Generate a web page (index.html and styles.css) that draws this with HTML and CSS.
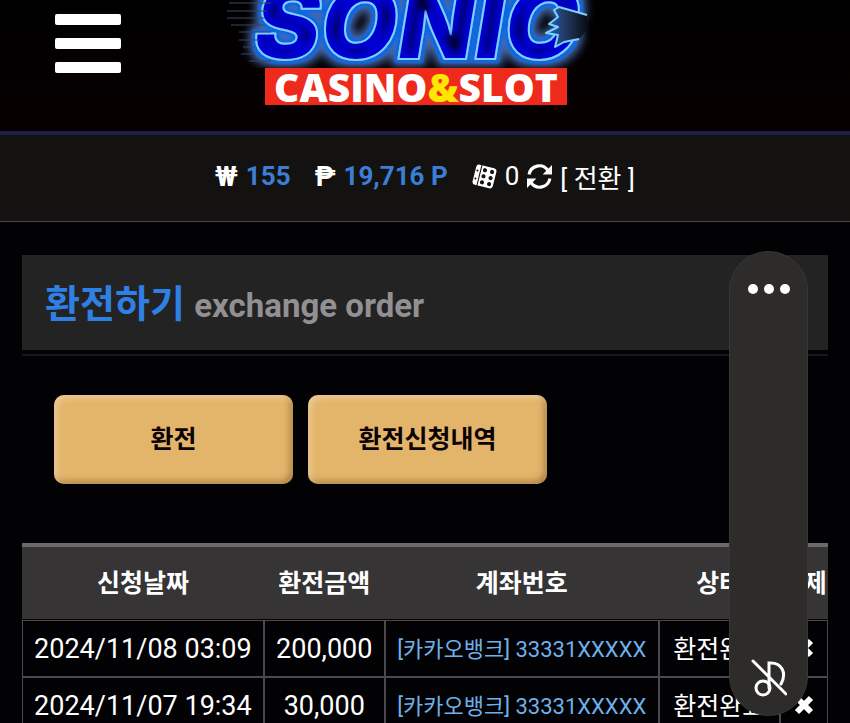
FILE: index.html
```html
<!DOCTYPE html>
<html lang="ko">
<head>
    <meta charset="UTF-8">
    <meta name="viewport" content="width=device-width, initial-scale=1.0">
    <title>환전하기</title>
    <link rel="stylesheet" href="styles.css">
</head>
<body>
    <!-- Header -->
    <header class="header">
        <button class="menu-btn" type="button" aria-label="메뉴">
            <span></span>
            <span></span>
            <span></span>
        </button>
        <a class="logo" href="#">
            <svg class="logo-neon" viewBox="0 0 390 68">
                <defs>
                    <filter id="neon" x="-10%" y="-10%" width="120%" height="130%">
                        <feMorphology in="SourceAlpha" operator="dilate" radius="6" result="wide"/>
                        <feGaussianBlur in="wide" stdDeviation="4" result="haze"/>
                        <feFlood flood-color="#4468a8"/>
                        <feComposite in2="haze" operator="in" result="halo"/>
                        <feMorphology in="SourceAlpha" operator="dilate" radius="3" result="near"/>
                        <feGaussianBlur in="near" stdDeviation="1" result="nearSoft"/>
                        <feFlood flood-color="#0a68e0"/>
                        <feComposite in2="nearSoft" operator="in" result="edge"/>
                        <feMorphology in="SourceAlpha" operator="erode" radius="7" result="thin"/>
                        <feGaussianBlur in="thin" stdDeviation="3" result="thinSoft"/>
                        <feFlood flood-color="#00022c"/>
                        <feComposite in2="thinSoft" operator="in" result="core"/>
                        <feMerge>
                            <feMergeNode in="halo"/>
                            <feMergeNode in="edge"/>
                            <feMergeNode in="SourceGraphic"/>
                            <feMergeNode in="core"/>
                        </feMerge>
                    </filter>
                    <linearGradient id="notch">
                        <stop offset="0" stop-color="#0a68e0"/>
                        <stop offset="0.4" stop-color="#24406c"/>
                        <stop offset="1" stop-color="#0a0c14"/>
                    </linearGradient>
                </defs>
                <text class="neon-text" x="33" y="59" filter="url(#neon)">SONIC</text>
                <path class="speed-lines" d="M8 3H50M6 11H46M6 18H44M10 25H44M18 32H50M18 40H38M22 47H34M20 54H34M28 61H50"/>
                <path class="neon-notch" d="M366 15L338 7L333 10L337 17L328 24L337 27L325 33L337 35L334 47L343 42L358 39L366 30Z"/>
                <path class="neon-teeth" d="M366 15L338 7L333 10L337 17L328 24L337 27L325 33L337 35L334 47L343 42L358 39"/>
            </svg>
            <span class="logo-tag">CASINO<b>&amp;</b>SLOT</span>
        </a>
    </header>

    <!-- Balance -->
    <div class="balance">
        <span class="sign">₩</span>
        <strong class="cash">155</strong>
        <span class="sign">₱</span>
        <strong class="point">19,716 P</strong>
        <svg class="dice" viewBox="0 0 24 24" aria-hidden="true">
            <g transform="rotate(14 12 12)">
                <rect x="2" y="2" width="20" height="20" rx="3" fill="#fff"/>
                <path d="M7 2V22" stroke="#131211" stroke-width="1"/>
                <g fill="#131211">
                    <circle cx="11" cy="6" r="2"/><circle cx="11" cy="12" r="2"/><circle cx="11" cy="18" r="2"/>
                    <circle cx="18" cy="6" r="2"/><circle cx="18" cy="12" r="2"/><circle cx="18" cy="18" r="2"/>
                    <circle cx="4" cy="8" r="1"/><circle cx="4" cy="16" r="1"/>
                </g>
            </g>
        </svg>
        <span>0</span>
        <a class="convert" href="#">
            <svg viewBox="0 0 24 24" aria-hidden="true">
                <path d="M2 10A10 10 0 0 1 20 6M22 14A10 10 0 0 1 4 18" fill="none" stroke="#fff" stroke-width="3"/>
                <path d="M24 1V10H15ZM0 23V14H9Z" fill="#fff"/>
            </svg>
            [ 전환 ]
        </a>
    </div>

    <main class="container">
        <h1 class="page-title">환전하기 <small>exchange order</small></h1>

        <div class="tabs">
            <button class="tab-btn" type="button">환전</button>
            <button class="tab-btn" type="button">환전신청내역</button>
        </div>

        <!-- Order history -->
        <table class="history">
            <thead>
                <tr>
                    <th class="col-date">신청날짜</th>
                    <th class="col-amount">환전금액</th>
                    <th class="col-account">계좌번호</th>
                    <th class="col-status">상태</th>
                    <th>삭제</th>
                </tr>
            </thead>
            <tbody>
                <tr>
                    <td>2024/11/08 03:09</td>
                    <td>200,000</td>
                    <td class="account">[카카오뱅크] 33331XXXXX</td>
                    <td class="status">환전완료</td>
                    <td><button class="delete-btn" type="button" aria-label="삭제"><svg viewBox="0 0 20 20"><path d="M3 3L17 17M17 3L3 17"/></svg></button></td>
                </tr>
                <tr>
                    <td>2024/11/07 19:34</td>
                    <td>30,000</td>
                    <td class="account">[카카오뱅크] 33331XXXXX</td>
                    <td class="status">환전완료</td>
                    <td><button class="delete-btn" type="button" aria-label="삭제"><svg viewBox="0 0 20 20"><path d="M3 3L17 17M17 3L3 17"/></svg></button></td>
                </tr>
            </tbody>
        </table>
    </main>

    <!-- Volume panel -->
    <div class="volume-panel">
        <button class="more-btn" type="button" aria-label="더보기">
            <span></span>
            <span></span>
            <span></span>
        </button>
        <button class="mute-btn" type="button" aria-label="음소거">
            <svg viewBox="0 0 36 38">
                <circle cx="12" cy="29" r="7"/>
                <path d="M18 29V4C31 3 36 14 30 25M2 2L35 35"/>
            </svg>
        </button>
    </div>
</body>
</html>
```

FILE: styles.css
```css
* {
    box-sizing: border-box;
}

body {
    margin: 0;
    background: #020103;
    color: #fff;
    font-family: Roboto, "Noto Sans CJK KR", sans-serif;
    font-size: 26px;
    overflow: hidden;
}

button {
    padding: 0;
    border: none;
    background: none;
    color: inherit;
    font-family: inherit;
    cursor: pointer;
}

a {
    color: inherit;
    text-decoration: none;
}

.header {
    display: grid;
    grid-template-columns: 1fr 390px 1fr;
    align-items: start;
    height: 135px;
    padding-right: 18px;
    background: linear-gradient(#000, #070001);
    border-bottom: 4px solid #1c2048;
}

.menu-btn {
    display: flex;
    flex-direction: column;
    gap: 13px;
    width: 66px;
    margin: 14px 0 0 55px;
}

.menu-btn span {
    height: 11px;
    border-radius: 2px;
    background: #fff;
}

.logo {
    display: flex;
    flex-direction: column;
    align-items: center;
}

.logo-neon {
    display: block;
    width: 390px;
    height: 68px;
}

.neon-text {
    fill: #0010d8;
    stroke: #7fd0ff;
    stroke-width: 2px;
    stroke-linejoin: round;
    font-family: Inter, sans-serif;
    font-size: 100px;
    font-weight: 900;
    font-style: italic;
}

.speed-lines {
    fill: none;
    stroke: #3b4663;
}

.neon-notch {
    fill: url(#notch);
}

.neon-teeth {
    fill: none;
    stroke: #7fd0ff;
    stroke-width: 2px;
    stroke-linejoin: round;
}

.logo-tag {
    width: 302px;
    background: #ee2a1c;
    font-family: "Open Sans", sans-serif;
    font-size: 39px;
    font-weight: 800;
    line-height: 37px;
    text-align: center;
}

.logo-tag b {
    color: #ffe600;
    font-weight: 800;
}

.balance {
    display: flex;
    align-items: center;
    justify-content: center;
    gap: 8px;
    height: 87px;
    padding-bottom: 4px;
    background: #131211;
    border-bottom: 1px solid #4a4a4a;
}

.sign {
    font-size: 28px;
    font-weight: 700;
}

.cash,
.point {
    color: #3a7fd5;
    font-weight: 700;
}

.cash {
    margin-right: 16px;
}

.point {
    margin-right: 16px;
}

.dice,
.convert svg {
    width: 25px;
    height: 25px;
}

.convert {
    display: flex;
    align-items: center;
    gap: 8px;
}

.container {
    padding: 33px 22px 0;
}

.page-title {
    margin: 0;
    height: 95px;
    padding-left: 23px;
    background: #242324;
    box-shadow: 0 4px 0 #020103, 0 6px 0 #191818;
    color: #2f80e4;
    font-size: 38px;
    line-height: 99px;
}

.page-title small {
    color: #929092;
    font-size: 33px;
    font-weight: 700;
}

.tabs {
    display: flex;
    gap: 15px;
    margin: 45px 32px 59px;
}

.tab-btn {
    width: 239px;
    height: 89px;
    padding-bottom: 6px;
    border-radius: 10px;
    background: #e3b56b;
    box-shadow: inset 3px 3px 6px rgba(255, 230, 200, 0.5), inset -3px -3px 6px rgba(120, 80, 30, 0.5);
    color: #0c0305;
    font-size: 25px;
    font-weight: 700;
}

.history {
    width: 100%;
    border-spacing: 0;
    table-layout: fixed;
    text-align: center;
    white-space: nowrap;
}

.history th {
    height: 77px;
    padding: 0 0 5px;
    background: #363435;
    border-top: 4px solid #6b6a6b;
    border-bottom: 1px solid #020103;
    font-size: 25px;
}

.history td {
    height: 57px;
    padding: 0;
    border: 1px solid #4c494c;
    font-size: 27px;
}

.col-date {
    width: 30%;
}

.col-amount {
    width: 15%;
}

.col-account {
    width: 34%;
}

.col-status {
    width: 15%;
}

.history .account {
    padding-bottom: 3px;
    color: #6eb1ea;
    font-size: 22px;
}

.history .status {
    padding-bottom: 3px;
    font-size: 25px;
}

.delete-btn svg {
    display: block;
    width: 20px;
    height: 20px;
    fill: none;
    stroke: #fff;
    stroke-width: 6px;
}

.volume-panel {
    position: fixed;
    top: 251px;
    right: 42px;
    display: flex;
    flex-direction: column;
    align-items: center;
    justify-content: space-between;
    width: 79px;
    height: 465px;
    padding: 32px 0 18px;
    border: 1px solid #393837;
    border-radius: 40px;
    background: #2d2c2a;
}

.more-btn {
    display: flex;
    gap: 6px;
}

.more-btn span {
    width: 10px;
    height: 10px;
    border-radius: 50%;
    background: #fff;
}

.mute-btn svg {
    display: block;
    width: 36px;
    height: 38px;
    fill: none;
    stroke: #fff;
    stroke-width: 3px;
    stroke-linecap: round;
}
```
